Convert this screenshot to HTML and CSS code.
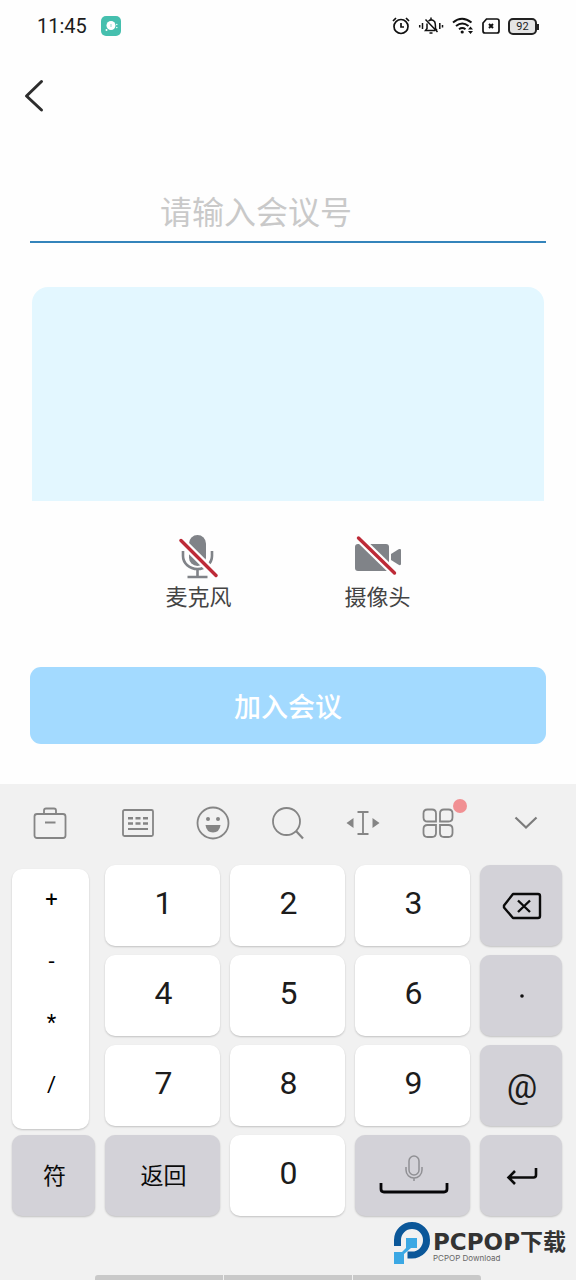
FILE: index.html
```html
<!DOCTYPE html>
<html lang="zh-CN">
<head>
<meta charset="utf-8">
<meta name="viewport" content="width=device-width, initial-scale=1">
<title>加入会议</title>
<link rel="stylesheet" href="styles.css">
</head>
<body>
<div class="status">
  <span class="status-time">11:45</span>
  <svg class="status-app" width="20" height="20" viewBox="0 0 20 20"><rect width="20" height="20" rx="5" fill="#45bfae"/><circle cx="10" cy="9.500" r="4.500" fill="#fff"/><circle cx="5.500" cy="14" r="1" fill="#fff"/><circle cx="15.800" cy="8.500" r=".7" fill="#fff"/><circle cx="15.800" cy="11.500" r=".7" fill="#fff"/><path d="M10 8v3" stroke="#8fd9ce"/></svg>
  <div class="status-icons">
    <svg width="18" height="18" viewBox="0 0 18 18" fill="none" stroke="#111" stroke-width="1.700"><circle cx="9" cy="9.500" r="7"/><path d="M9 6v4h3M1 4l3-3M17 4l-3-3"/></svg>
    <svg width="26" height="18" viewBox="0 0 26 18" fill="none" stroke="#111" stroke-width="1.500"><path d="M17 13.500H7.500L9 11.500V6.500M10.500 4q3-2.500 6 .5 1 1.500 1 7l1.500 2M7.500 2.500l12 12.500M13 .5v2M11.500 16h3M4.500 6v6M1.700 8v2.500M21.800 6v6M24.500 8v2.500"/></svg>
    <svg width="22" height="18" viewBox="0 0 22 18" fill="none" stroke="#111" stroke-width="2"><path d="M1 5.500q9-7.500 18.500 0M4 9q6.300-5 12.500 0M7 12.200q3.300-2.500 6.500 0"/><circle cx="10.200" cy="15" r="1.600" fill="#111" stroke="none"/><path d="M16 12.500l2.500-3 2.500 3zM16 14l2.500 3 2.500-3z" fill="#111" stroke="none"/></svg>
    <svg width="18" height="16" viewBox="0 0 18 16" fill="none" stroke="#111" stroke-width="1.700"><path d="M4.500 1H15q2 0 2 2v10q0 2-2 2H3q-2 0-2-2V5z"/><path d="M7 6l4 4M11 6l-4 4" stroke-width="2"/></svg>
    <span class="battery">92</span>
  </div>
</div>

<main class="meeting">
  <header class="topbar">
    <button class="back" type="button" aria-label="返回上一页"><svg width="20" height="34" viewBox="0 0 20 34" fill="none" stroke="#2d2d2d" stroke-width="3" stroke-linecap="round" stroke-linejoin="round"><path d="M17.500 2.500L2.500 17l15 14"/></svg></button>
  </header>
  <input class="meeting-id" type="text" inputmode="numeric" placeholder="请输入会议号" aria-label="会议号">
  <div class="preview"></div>
  <div class="devices">
    <button class="device" type="button">
      <svg width="40" height="46" viewBox="0 0 40 46"><rect x="11" y="2" width="17" height="31" rx="8.500" fill="#808388"/><path d="M5 18v5a14.500 13 0 0 0 29 0v-5M19.500 36v8M9.500 44h20" fill="none" stroke="#808388" stroke-width="2.600"/><path d="M1 5.500L39 43.500" stroke="#fefefe" stroke-width="8"/><path d="M3 7.500L38 42.500" stroke="#bd2a37" stroke-width="3.400" stroke-linecap="round"/></svg>
      <span>麦克风</span>
    </button>
    <button class="device" type="button">
      <svg width="48" height="46" viewBox="0 0 48 46"><rect x="1" y="11" width="34" height="27" rx="3" fill="#808388"/><path d="M37 21l8-5q2-.5 2 1v14q0 1.500-2 1l-8-5z" fill="#808388"/><path d="M3 3.500L42 41.500" stroke="#fefefe" stroke-width="8"/><path d="M4.500 5L40.500 40" stroke="#bd2a37" stroke-width="3.400" stroke-linecap="round"/></svg>
      <span>摄像头</span>
    </button>
  </div>
  <button class="join" type="button">加入会议</button>
</main>

<section class="keyboard" aria-label="键盘">
  <div class="tools">
    <button type="button" aria-label="工具箱"><svg width="34" height="34" viewBox="0 0 34 34" fill="none" stroke="#858585" stroke-width="1.800"><rect x="1.500" y="8" width="31" height="24" rx="2.500"/><path d="M11 8V4.500q0-2 2-2h8q2 0 2 2V8M12 16.500h10.500"/></svg></button>
    <button type="button" aria-label="键盘"><svg width="34" height="34" viewBox="0 0 34 34" fill="none" stroke="#858585" stroke-width="1.800"><rect x="2" y="4" width="30" height="26" rx="1.500"/><path d="M7 12.200h20M7 17.500h20" stroke-width="2.400" stroke-dasharray="5 2.500"/><path d="M7 23h20" stroke-width="2"/></svg></button>
    <button type="button" aria-label="表情"><svg width="34" height="34" viewBox="0 0 34 34" fill="none" stroke="#858585" stroke-width="1.800"><circle cx="17" cy="17" r="15.500"/><g fill="#858585" stroke="none"><circle cx="12" cy="13" r="2"/><circle cx="22" cy="13" r="2"/><path d="M9.500 19h15q-1 7.500-7.500 7.500T9.500 19z"/></g></svg></button>
    <button type="button" aria-label="搜索"><svg width="34" height="34" viewBox="0 0 34 34" fill="none" stroke="#858585" stroke-width="1.800"><circle cx="15.500" cy="15.500" r="13.500"/><path d="M25 25l7 7.500" stroke-width="2.200"/></svg></button>
    <button type="button" aria-label="移动光标"><svg width="34" height="34" viewBox="0 0 34 34" fill="none" stroke="#858585" stroke-width="1.800"><path d="M11.500 6h11M11.500 28h11M17 6v22"/><path d="M.5 17l7-5v10zM33.500 17l-7-5v10z" fill="#858585" stroke="none"/></svg></button>
    <button class="has-badge" type="button" aria-label="更多功能"><svg width="34" height="34" viewBox="0 0 34 34" fill="none" stroke="#858585" stroke-width="1.800"><path d="M15 15.500H6.500q-4 0-4-4v-4q0-4 4-4H11q4 0 4 4zM19 15.500h8.500q4 0 4-4v-4q0-4-4-4H23q-4 0-4 4zM15 19H6.500q-4 0-4 4v4q0 4 4 4H11q4 0 4-4zM19 19h8.500q4 0 4 4v4q0 4-4 4H23q-4 0-4-4z"/></svg><span class="badge"></span></button>
    <button type="button" aria-label="收起键盘"><svg width="34" height="34" viewBox="0 0 34 34" fill="none" stroke="#7c7c7c" stroke-width="2.200"><path d="M6.500 11.500l10.500 10 10.500-10"/></svg></button>
  </div>
  <div class="keys">
    <div class="symbols">
      <button type="button">+</button><button type="button">-</button><button type="button">*</button><button type="button">/</button>
    </div>
    <button class="key" type="button">1</button>
    <button class="key" type="button">2</button>
    <button class="key" type="button">3</button>
    <button class="key key-dark" type="button" aria-label="删除"><svg width="40" height="28" viewBox="0 0 40 28" fill="none" stroke="#0b0b0b" stroke-width="2.400" stroke-linejoin="round"><path d="M11 2h25q2 0 2 2v20q0 2-2 2H11L2 15.500v-2z"/><path d="M16 8.500l12 11.500M28 8.500L16 20"/></svg></button>
    <button class="key" type="button">4</button>
    <button class="key" type="button">5</button>
    <button class="key" type="button">6</button>
    <button class="key key-dark" type="button" aria-label="点"><svg width="10" height="10" viewBox="0 0 10 10"><circle cx="5" cy="5" r="1.800" fill="#111"/></svg></button>
    <button class="key" type="button">7</button>
    <button class="key" type="button">8</button>
    <button class="key" type="button">9</button>
    <button class="key key-dark key-at" type="button">@</button>
    <button class="key key-dark key-text" type="button">符</button>
    <button class="key key-dark key-text" type="button">返回</button>
    <button class="key" type="button">0</button>
    <button class="key key-dark" type="button" aria-label="空格"><svg width="70" height="44" viewBox="0 0 70 44" fill="none"><path d="M30 7a5 5 0 0 1 10 0v9a5 5 0 0 1-10 0zM27 13v3a8 8 0 0 0 16 0v-3M35 24v3" stroke="#909094" stroke-width="1.500"/><path d="M2 29v6q0 3 3 3h60q3 0 3-3v-6" stroke="#060608" stroke-width="2.800"/></svg></button>
    <button class="key key-dark" type="button" aria-label="回车"><svg width="32" height="20" viewBox="0 0 32 20" fill="none" stroke="#0b0b0b" stroke-width="2.600"><path d="M30 2v7q0 2.500-2.500 2.500H3M9 5l-6.500 6.500L9 18"/></svg></button>
  </div>
  <div class="navhints"><i></i><i></i><i></i></div>
  <div class="brand">
    <svg width="38" height="44" viewBox="0 0 38 44"><path d="M4.500 25v-6A14.500 14.500 0 0 1 33.500 19 14.500 14.500 0 0 1 19 34h-4.500" fill="none" stroke="#0b5799" stroke-width="7"/><path d="M13 17h11v10h-6l-7 6v10H1V31h8l4-4z" fill="#3ba8e4"/></svg>
    <div class="brand-text"><span class="brand-name">PCPOP下载</span><span class="brand-sub">PCPOP Download</span></div>
  </div>
</section>
</body>
</html>
```

FILE: styles.css
```css
* { box-sizing: border-box; }

body {
  margin: 0;
  min-height: 100vh;
  display: flex;
  flex-direction: column;
  background: #fefefe;
  color: #1c1c1c;
  font-family: Roboto, "Noto Sans CJK SC", sans-serif;
}

button {
  margin: 0;
  padding: 0;
  border: 0;
  background: none;
  color: inherit;
  font: inherit;
  display: flex;
  align-items: center;
  justify-content: center;
}

svg { display: block; flex: none; }

.status {
  height: 52px;
  padding: 0 39px 0 37px;
  display: flex;
  align-items: center;
}
.status-time { font-size: 20px; line-height: 24px; }
.status-app { margin-left: 14px; }
.status-icons {
  margin-left: auto;
  display: flex;
  align-items: center;
  gap: 8px;
}
.battery {
  position: relative;
  width: 29px;
  height: 17px;
  border: 2px solid #222;
  border-radius: 5px;
  background: #e4e4e4;
  font-size: 11px;
  line-height: 13px;
  text-align: center;
}
.battery::after {
  content: "";
  position: absolute;
  top: 4px;
  right: -4px;
  width: 2px;
  height: 6px;
  background: #222;
}

.meeting {
  display: flex;
  flex-direction: column;
  padding: 0 30px 40px;
}
.topbar { height: 88px; display: flex; align-items: center; }
.back { width: 40px; height: 40px; margin-left: -16px; }

.meeting-id {
  width: 100%;
  height: 61px;
  margin-top: 42px;
  padding: 2px 64px 0 0;
  border: 0;
  border-bottom: 2px solid #3484bb;
  background: none;
  font: inherit;
  font-size: 32px;
  text-align: center;
  outline: 0;
}
.meeting-id::placeholder { color: #c9c9c9; opacity: 1; }

.preview {
  height: 214px;
  margin: 44px 2px 0;
  border-radius: 16px 16px 0 0;
  background: #e3f7ff;
}

.devices {
  margin-top: 32px;
  display: flex;
  justify-content: center;
  gap: 113px;
}
.device {
  flex-direction: column;
  gap: 2px;
  color: #444;
  font-size: 22px;
  line-height: 34px;
}

.join {
  height: 77px;
  margin-top: 52px;
  border-radius: 11px;
  background: #a3daff;
  color: #fff;
  font-size: 27px;
  font-weight: 500;
}

.keyboard {
  position: relative;
  flex: 1;
  display: flex;
  flex-direction: column;
  background: #f1f1f1;
}
.tools {
  height: 77px;
  display: grid;
  grid-template-columns: 100fr 75fr 75fr 75fr 75fr 75fr 101fr;
}
.has-badge { position: relative; }
.badge {
  position: absolute;
  top: 15px;
  left: calc(50% + 15px);
  width: 14px;
  height: 14px;
  border-radius: 50%;
  background: #f19093;
}

.keys {
  padding: 4px 14px 0 12px;
  display: grid;
  grid-template-columns: 83fr 115fr 115fr 115fr 82fr;
  grid-auto-rows: 81px;
  gap: 9px 10px;
}
.key, .symbols {
  border-radius: 10px;
  background: #fff;
  box-shadow: 0 1px 2px #0003;
}
.key { font-size: 32px; padding: 0 0 6px 2px; }
.key-dark { background: #d3d2d8; padding-bottom: 0; }
.key-text { padding-bottom: 4px; font-size: 23px; color: #0b0b0b; }
.key-at { font-size: 34px; }
.symbols {
  grid-row: span 3;
  margin: 4px 6px -3px 0;
  display: grid;
  grid-template-rows: repeat(4, 1fr);
  padding: 0 0 14px 2px;
  color: #000;
  font-size: 22px;
}

.navhints {
  margin: auto 95px 0;
  display: flex;
  gap: 1px;
}
.navhints i { flex: 1; height: 5px; background: #c9c9c9; }
.navhints i:first-child { border-radius: 3px 0 0 0; }
.navhints i:last-child { border-radius: 0 3px 0 0; }

.brand {
  position: absolute;
  right: 10px;
  bottom: 15px;
  display: flex;
  align-items: center;
  gap: 2px;
  color: #333;
}
.brand-text { display: flex; flex-direction: column; padding-top: 6px; }
.brand-name {
  font-family: "DejaVu Sans", "Noto Sans CJK SC", sans-serif;
  font-size: 23px;
  font-weight: 700;
  line-height: 24px;
}
.brand-sub {
  font-family: Inter, sans-serif;
  font-size: 8px;
  line-height: 8px;
  color: #666;
}
```
